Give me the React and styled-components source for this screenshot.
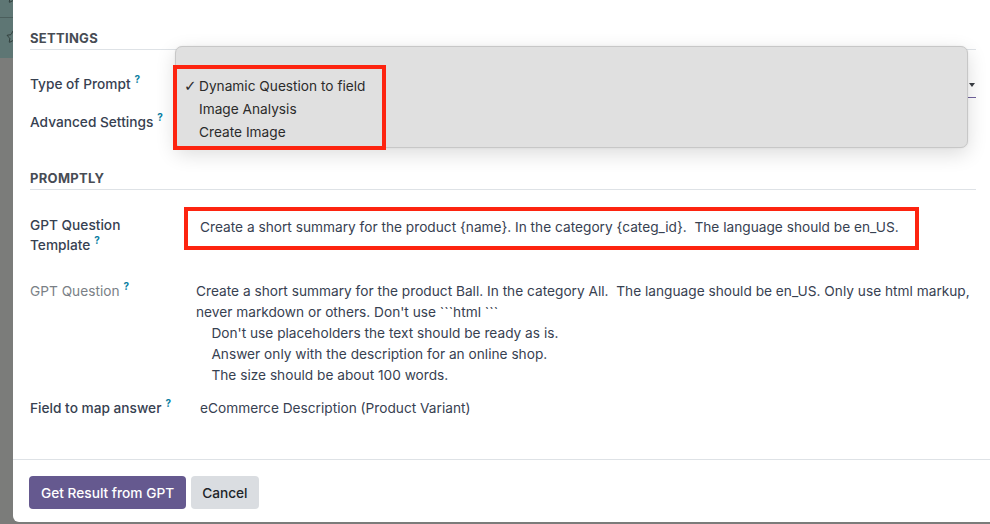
import React from "react";
import styled, { createGlobalStyle } from "styled-components";
import { Star } from "lucide-react";

const Global = createGlobalStyle`
  html, body { margin: 0; padding: 0; overflow: hidden; }
  body { font-family: Inter, "Noto Sans", "Liberation Sans", sans-serif; }
  * { box-sizing: border-box; }
`;

const Page = styled.div`
  display: flex;
  width: 990px;
  height: 524px;
  background-color: #7b7c7a;
  overflow: hidden;
`;

const Backdrop = styled.div`
  width: 13px;
  min-width: 13px;
  flex: 0 0 13px;
  display: grid;
  grid-template-rows: 18px 40px 1fr;
  background-color: #7b7c7a;
`;

const BackdropRow = styled.div`
  width: 13px;
  background-color: #5e7674;
  border-bottom: ${(p) => (p.$line ? "1px solid #4b5e5c" : "0")};
  overflow: hidden;
  position: relative;
  color: #26312f;
`;

const RowStar = styled(Star)`
  display: block;
  margin-left: 6px;
  margin-top: ${(p) => p.$top}px;
`;

const Modal = styled.div`
  flex: 1 1 auto;
  min-width: 0;
  height: 522px;
  background: #fff;
  border-bottom-left-radius: 6px;
  display: flex;
  flex-direction: column;
  color: #374151;
  font-size: 13.7px;
`;

const Body = styled.div`
  flex: 1;
  padding: 28px 14px 0 17px;
  display: flex;
  flex-direction: column;
`;

const SectionTitle = styled.div`
  font-size: 13px;
  font-weight: 700;
  letter-spacing: 0.3px;
  text-transform: uppercase;
  color: #474c54;
  line-height: 20px;
  padding-bottom: 1px;
  border-bottom: 1px solid #dee2e6;
  margin-top: ${(p) => p.$mt || 0}px;
`;

const Row = styled.div`
  display: grid;
  grid-template-columns: 154px 1fr;
  align-items: start;
  margin-top: ${(p) => p.$mt}px;
`;

const Label = styled.div`
  line-height: ${(p) => p.$lh || 21}px;
  padding-top: ${(p) => p.$pt || 0}px;
  color: ${(p) => (p.$muted ? "#7a7f86" : "#374151")};
  font-weight: ${(p) => (p.$muted ? 400 : 500)};
`;

const Help = styled.sup`
  color: #0a7fa3;
  font-size: 10px;
  font-weight: 700;
  margin-left: 4px;
  vertical-align: 6px;
  line-height: 0;
`;

const SelectWrap = styled.div`
  position: relative;
`;

const SelectField = styled.div`
  display: flex;
  align-items: center;
  justify-content: flex-end;
  height: 26px;
  padding: 2px 1px 0 0;
  border-bottom: 1px solid #71639e;
`;

const Caret = styled.span`
  width: 0;
  height: 0;
  border-left: 3px solid transparent;
  border-right: 3px solid transparent;
  border-top: 4px solid #3b3f45;
  margin-bottom: 2px;
`;

const Popup = styled.div`
  position: absolute;
  left: -9px;
  top: -26px;
  width: 793px;
  height: 102px;
  background: #e0e0e0;
  border: 1px solid #c7c7c7;
  border-radius: 7px;
  box-shadow: 0 6px 20px rgba(0, 0, 0, 0.14), 0 0 2px rgba(0, 0, 0, 0.08);
  padding: 27px 0 0 8px;
  z-index: 2;
`;

const Option = styled.div`
  display: flex;
  align-items: center;
  height: 23px;
  color: #2b2b2b;
  font-size: 13.7px;
`;

const Check = styled.span`
  width: 15px;
  font-size: 15px;
  font-family: "DejaVu Sans", sans-serif;
  color: #2b2b2b;
`;

const Annotation = styled.div`
  position: absolute;
  left: -11px;
  top: -7px;
  width: 213px;
  height: 85px;
  border: 4px solid #fd2410;
  z-index: 3;
`;

const CheckboxBox = styled.span`
  display: inline-block;
  width: 14px;
  height: 14px;
  border: 1px solid #adb5bd;
  border-radius: 3px;
  margin: 6px 0 0 0;
`;

const BoxedValue = styled.div`
  justify-self: start;
  border: 4px solid #fd2410;
  padding: 6px 16px 8px 12px;
  line-height: 21px;
  white-space: pre;
`;

const Plain = styled.div`
  line-height: 21px;
  padding-left: ${(p) => p.$pl}px;
  white-space: pre-wrap;
`;

const Footer = styled.div`
  border-top: 1px solid #dee2e6;
  padding: 16px 16px 0;
  height: 63px;
  display: flex;
  gap: 5px;
  align-items: flex-start;
`;

const Button = styled.button`
  height: 33px;
  border: none;
  border-radius: 4px;
  font-family: inherit;
  font-size: 13.7px;
  font-weight: 500;
  padding: 0 ${(p) => (p.$primary ? 12 : 11)}px;
  background: ${(p) => (p.$primary ? "#65598f" : "#dadde1")};
  color: ${(p) => (p.$primary ? "#fff" : "#212529")};
  cursor: pointer;
`;

const questionLines = [
  "Create a short summary for the product Ball. In the category All.  The language should be en_US. Only use html markup,",
  "never markdown or others. Don't use ```html ```",
  "    Don't use placeholders the text should be ready as is.",
  "    Answer only with the description for an online shop.",
  "    The size should be about 100 words.",
];

export default function App() {
  return (
    <>
      <Global />
      <Page>
        <Backdrop>
          <BackdropRow $line>
            <RowStar size={14} strokeWidth={1.4} $top={-10} />
          </BackdropRow>
          <BackdropRow>
            <RowStar size={14} strokeWidth={1.4} $top={12} />
          </BackdropRow>
        </Backdrop>
        <Modal>
          <Body>
            <SectionTitle>Settings</SectionTitle>
            <Row $mt={22}>
              <Label $pt={2}>
                Type of Prompt<Help>?</Help>
              </Label>
              <SelectWrap>
                <SelectField>
                  <Caret />
                </SelectField>
                <Popup>
                  <Option>
                    <Check>✓</Check>Dynamic Question to field
                  </Option>
                  <Option>
                    <Check />Image Analysis
                  </Option>
                  <Option>
                    <Check />Create Image
                  </Option>
                </Popup>
                <Annotation />
              </SelectWrap>
            </Row>
            <Row $mt={12}>
              <Label $pt={2}>
                Advanced Settings<Help>?</Help>
              </Label>
              <div>
                <CheckboxBox />
              </div>
            </Row>

            <SectionTitle $mt={35}>Promptly</SectionTitle>
            <Row $mt={17}>
              <Label $pt={8} $lh={20}>
                GPT Question
                <br />
                Template<Help>?</Help>
              </Label>
              <BoxedValue>
                {"Create a short summary for the product {name}. In the category {categ_id}.  The language should be en_US."}
              </BoxedValue>
            </Row>
            <Row $mt={26}>
              <Label $muted>
                GPT Question<Help>?</Help>
              </Label>
              <Plain $pl={12}>{questionLines.join("\n")}</Plain>
            </Row>
            <Row $mt={12}>
              <Label>
                Field to map answer<Help>?</Help>
              </Label>
              <Plain $pl={16}>eCommerce Description (Product Variant)</Plain>
            </Row>
          </Body>
          <Footer>
            <Button $primary>Get Result from GPT</Button>
            <Button>Cancel</Button>
          </Footer>
        </Modal>
      </Page>
    </>
  );
}
